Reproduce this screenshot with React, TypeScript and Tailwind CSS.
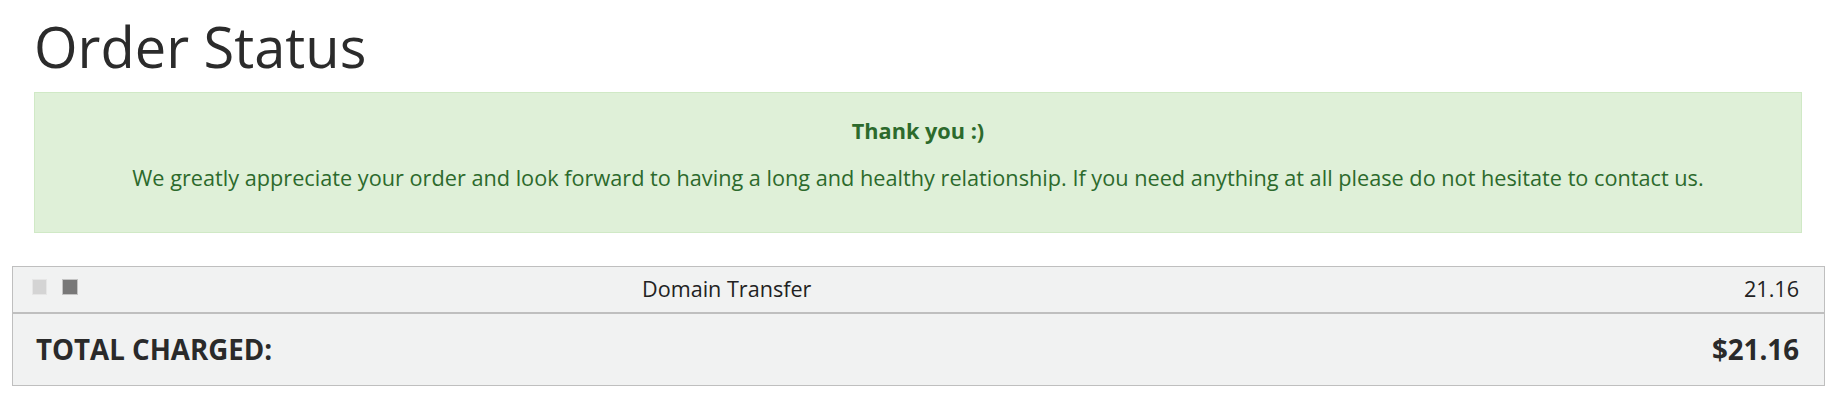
export default function App() {
  return (
    <div className="min-h-screen w-full bg-white font-['Open_Sans',sans-serif]">
      <div className="pl-[34px] pr-[36px] pt-[16px]">
        <h1 className="text-[56px] leading-[60px] font-normal text-[#2b2b2b]">Order Status</h1>

        {/* alert */}
        <div className="mt-[16px] border border-[#d0e9c6] bg-[#dff0d8] pt-[23px] pb-[23px] text-center text-[21.7px] leading-[30px] text-[#2c6a2c]">
          <p className="mb-[17px] font-bold">Thank you :)</p>
          <p className="mb-[16px]">
            We greatly appreciate your order and look forward to having a long and healthy relationship. If you
            need anything at all please do not hesitate to contact us.
          </p>
        </div>
      </div>

      {/* summary table */}
      <div className="mt-[33px] ml-[12px] mr-[13px] border border-[#bfbfbf] bg-[#f1f2f2] text-[#222]">
        <div className="grid h-[47px] grid-cols-[610px_1fr_auto] items-center border-b-2 border-[#bfbfbf] pl-[19px] pr-[25px] text-[21.6px]">
          <div className="flex items-center gap-[15px] -mt-[5px]">
            <span className="h-[16px] w-[15px] border border-[#e6e6e6] bg-[#d4d4d4]" />
            <span className="h-[16px] w-[16px] border border-[#c4c4c4] bg-[#787878]" />
          </div>
          <span>Domain Transfer</span>
          <span>21.16</span>
        </div>
        <div className="flex h-[71px] items-center justify-between pl-[23px] pr-[25px] text-[27.7px] font-bold text-[#2a2a2a]">
          <span>TOTAL CHARGED:</span>
          <span>$21.16</span>
        </div>
      </div>
    </div>
  );
}
